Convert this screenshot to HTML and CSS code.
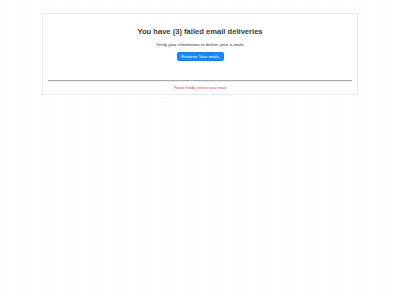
FILE: index.html
```html
<!DOCTYPE html>
<html lang="en">
<head>
    <meta charset="UTF-8">
    <meta name="viewport" content="width=device-width, initial-scale=1.0">
    <title>Failed deliveries</title>
    <link rel="stylesheet" href="styles.css">
</head>
<body>
    <div class="notice-box">
        <h1>You have (3) failed email deliveries</h1>
        <p class="lead">Verify your information to deliver your e-mails</p>
        <button class="retrieve-button">Retrieve Your mails</button>
        <hr class="divider">
        <p class="warning">Please Kindly retrieve your email</p>
    </div>
</body>
</html>
```

FILE: styles.css
```css
* {
    margin: 0;
    padding: 0;
    box-sizing: border-box;
    font-family: 'Liberation Sans', Arial, sans-serif;
}

body {
    background-color: #ffffff;
    background-image: radial-gradient(rgba(0, 0, 0, 0.02) 0.6px, transparent 0.8px);
    background-size: 3px 4px;
    color: #333333;
    min-height: 100vh;
}

.notice-box {
    width: 316px;
    height: 82px;
    margin: 13px auto 0;
    padding: 0 5px;
    background: #ffffff;
    border: 1px solid #e8e8e8;
    text-align: center;
}

h1 {
    font-size: 7.6px;
    font-weight: 600;
    color: #3a3a3a;
    padding-top: 13px;
    line-height: 10px;
}

.lead {
    font-size: 4.4px;
    color: #333333;
    margin-top: 5px;
    line-height: 6px;
}

.retrieve-button {
    display: block;
    background: #1a88f5;
    color: #ffffff;
    border: 1px solid #1580ee;
    border-radius: 1.5px;
    font-size: 4.4px;
    width: 47px;
    height: 9px;
    margin: 4px auto 0;
    line-height: 7px;
}

.divider {
    border: none;
    border-top: 1px solid #a9a9a9;
    border-bottom: 1px solid #ececec;
    margin-top: 19px;
}

.warning {
    font-size: 3.6px;
    color: #e0364b;
    margin-top: 4px;
    line-height: 5px;
}
```
